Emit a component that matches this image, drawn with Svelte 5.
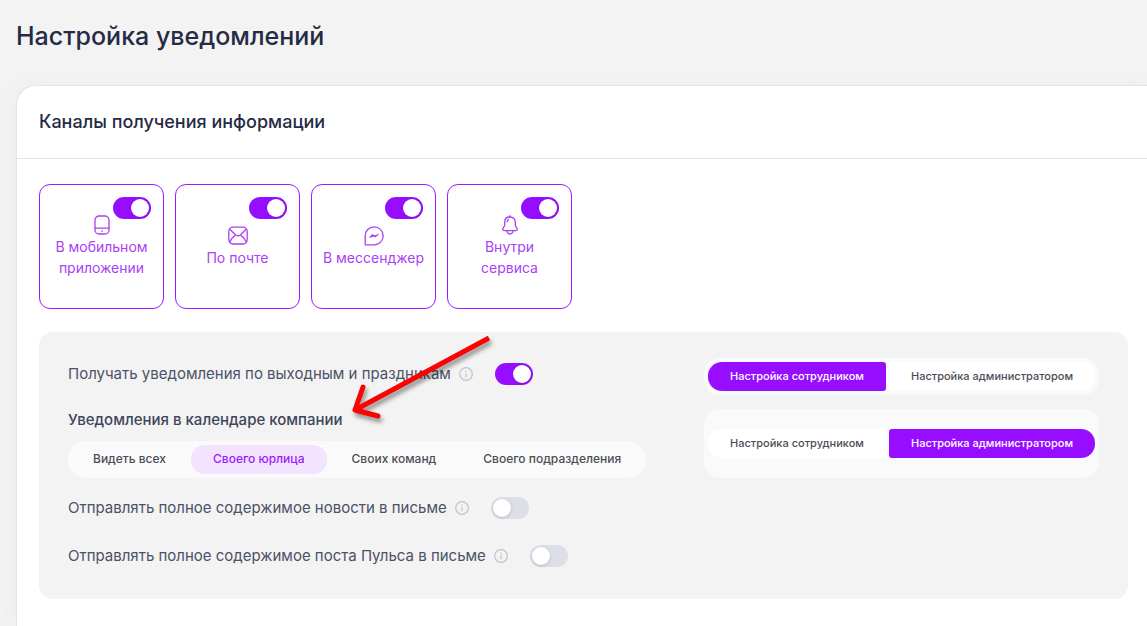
<script lang="ts">
  let channels = $state([
    { icon: "phone", label: "В мобильном приложении", on: true },
    { icon: "mail", label: "По почте", on: true },
    { icon: "chat", label: "В мессенджер", on: true },
    { icon: "bell", label: "Внутри сервиса", on: true },
  ]);

  const scopes = ["Видеть всех", "Своего юрлица", "Своих команд", "Своего подразделения"];
  let scope = $state(1);

  const owners = ["Настройка сотрудником", "Настройка администратором"];
  let weekendOwner = $state(0);
  let calendarOwner = $state(1);

  let weekend = $state(true);
  let news = $state(false);
  let pulse = $state(false);
</script>

{#snippet info()}
  <svg class="info" viewBox="0 0 14 14" aria-hidden="true">
    <circle cx="7" cy="7" r="6.3" />
    <path d="M7 6.2v4M7 3.8v1.2" />
  </svg>
{/snippet}

<main>
  <h1>Настройка уведомлений</h1>

  <section class="card">
    <h2>Каналы получения информации</h2>

    <div class="body">
      <div class="channels">
        {#each channels as channel}
          <label class="channel">
            <input type="checkbox" class="toggle" bind:checked={channel.on} />
            <svg class="icon" viewBox="0 0 20 20" aria-hidden="true">
              {#if channel.icon === "phone"}
                <rect x="3" y="1" width="14" height="18" rx="4" />
                <path d="M3 13.2h14" />
                <path d="M9.6 16.1h.8" />
              {:else if channel.icon === "mail"}
                <rect x="0.8" y="1.2" width="18.4" height="16.8" rx="4.2" />
                <path d="M1.8 3.2l5.6 5.6c1.500 1.300 3.700 1.300 5.200 0l5.600-5.600" />
                <path d="M1.800 16c.9-2.600 2.700-4.800 5.200-6.400M18.200 16c-.9-2.600-2.700-4.800-5.200-6.400" />
              {:else if channel.icon === "chat"}
                <path d="M1.2 18.8V10a9 9 0 1 1 9 8.800z" />
                <path d="M6 11.400l2.600-2.600 2.400 2 3-2.400M8 10.600l1-.6M11 9.600l1.200.2" />
              {:else}
                <path d="M10 2C6.6 2 4.7 4.3 4.7 7.2v2.9c0 1.2-.8 1.9-1.6 3-.8 1.3-.3 2.5 1.1 2.500h11.600c1.400 0 1.900-1.200 1.100-2.500-.8-1.100-1.600-1.800-1.600-3V7.200C15.300 4.300 13.400 2 10 2z" />
                <path d="M10 .7V2M7 15.800c.2 2 1.400 3.200 3 3.200s2.800-1.200 3-3.200M7.200 6.600c.1-.9.6-1.600 1.400-1.900" />
              {/if}
            </svg>
            <span>{channel.label}</span>
          </label>
        {/each}
      </div>

      <div class="panel">
        <div class="options">
          <label class="option">
            <span>Получать уведомления по выходным и праздникам</span>
            {@render info()}
            <input type="checkbox" class="toggle" bind:checked={weekend} />
          </label>

          <div>
            <h3>Уведомления в календаре компании</h3>
            <div class="scopes">
              {#each scopes as name, i}
                <button type="button" class:active={scope === i} onclick={() => (scope = i)}>{name}</button>
              {/each}
            </div>
          </div>

          <div class="letters">
            <label class="option">
              <span>Отправлять полное содержимое новости в письме</span>
              {@render info()}
              <input type="checkbox" class="toggle" bind:checked={news} />
            </label>
            <label class="option">
              <span>Отправлять полное содержимое поста Пульса в письме</span>
              {@render info()}
              <input type="checkbox" class="toggle" bind:checked={pulse} />
            </label>
          </div>
        </div>

        <div class="owners">
          <div class="owner">
            {#each owners as name, i}
              <button type="button" class:active={weekendOwner === i} onclick={() => (weekendOwner = i)}>{name}</button>
            {/each}
          </div>
          <div class="owner tall">
            {#each owners as name, i}
              <button type="button" class:active={calendarOwner === i} onclick={() => (calendarOwner = i)}>{name}</button>
            {/each}
          </div>
        </div>

        <svg class="arrow" viewBox="0 0 150 100" aria-hidden="true">
          <path d="M144 10L10 82" />
          <path d="M18 59L10 82L33 88" stroke-linecap="round" />
        </svg>
      </div>
    </div>
  </section>
</main>

<style>
  :global(body) {
    background: #f3f3f3;
  }
  main {
    padding: 20px 0 0 16px;
    font-family: Inter, "Liberation Sans", sans-serif;
    color: #262b45;
    overflow: hidden;
  }
  h1,
  h2,
  h3 {
    margin: 0;
    font-weight: 500;
  }
  h1 {
    font-size: 25px;
    line-height: 32px;
  }
  .card {
    margin-top: 33px;
    background: #fff;
    border: 1px solid #e4e5ea;
    border-right: 0;
    border-bottom: 0;
    border-top-left-radius: 20px;
    box-shadow: 0 0 16px rgba(222, 232, 242, 0.5);
  }
  h2 {
    padding: 24px 22px;
    border-bottom: 1px solid #e4e5ea;
    font-size: 18px;
    line-height: 24px;
  }
  .body {
    padding: 25px 19px 28px 22px;
  }
  .channels {
    display: flex;
    gap: 11px;
  }
  .channel {
    position: relative;
    display: flex;
    flex-direction: column;
    align-items: center;
    justify-content: center;
    gap: 1px;
    box-sizing: border-box;
    width: 125px;
    height: 125px;
    padding: 0 8px;
    border: 1px solid #9a1aff;
    border-radius: 11px;
    color: #ab3ff5;
    font-size: 14px;
    line-height: 21px;
    text-align: center;
  }
  .channel .toggle {
    position: absolute;
    top: 12px;
    right: 12px;
  }
  .icon {
    width: 20px;
    height: 20px;
    fill: none;
    stroke: #ab3ff5;
    stroke-width: 1.3;
    stroke-linecap: round;
    stroke-linejoin: round;
  }
  .toggle {
    appearance: none;
    display: flex;
    align-items: center;
    flex: none;
    box-sizing: border-box;
    width: 38px;
    height: 22px;
    margin: 0;
    padding: 2px;
    border-radius: 11px;
    background: #dcdfe7;
  }
  .toggle::before {
    content: "";
    width: 18px;
    height: 18px;
    border-radius: 50%;
    background: #fff;
    box-shadow: 0 1px 3px rgba(32, 37, 63, 0.2);
  }
  .toggle:checked {
    justify-content: flex-end;
    background: #960dff;
  }
  .panel {
    position: relative;
    display: flex;
    justify-content: space-between;
    align-items: flex-start;
    margin-top: 23px;
    padding: 26px 29px;
    border-radius: 14px;
    background: #f3f3f3;
  }
  .options {
    padding: 5px 0 6px;
  }
  .option {
    display: flex;
    align-items: center;
    height: 22px;
    color: #4c5167;
    font-size: 15px;
    line-height: 20px;
  }
  .letters {
    display: grid;
    gap: 26px;
    margin-top: 19px;
  }
  .info {
    width: 14px;
    height: 14px;
    margin: 0 22px 0 8px;
    fill: none;
    stroke: #c0c3cf;
    stroke-width: 1.2;
  }
  h3 {
    margin-top: 25px;
    color: #40455c;
    font-size: 15px;
    line-height: 20px;
  }
  .scopes {
    display: flex;
    gap: 3px;
    width: max-content;
    margin-top: 11px;
    padding: 4px 3px;
    border-radius: 18px;
    background: #fafafa;
  }
  button {
    height: 29px;
    border: 0;
    background: none;
    color: #4b4d55;
    font-family: inherit;
    font-size: 12px;
    font-weight: 500;
    line-height: 16px;
    white-space: nowrap;
  }
  .scopes button {
    padding: 0 22px 2px;
    border-radius: 14px;
  }
  .scopes .active {
    background: #f3e3ff;
    color: #9a1aff;
  }
  .owners {
    display: grid;
    gap: 14px;
  }
  .owner {
    display: grid;
    grid-template-columns: 178px 206px;
    gap: 3px;
    padding: 4px;
    border-radius: 16px;
    background: #fafafa;
  }
  .owner.tall {
    padding: 20px 4px;
  }
  .owner button {
    padding: 0 20px 2px;
    background: #fff;
    font-size: 11px;
  }
  .owner button:first-child {
    border-radius: 14px 3px 3px 14px;
  }
  .owner button:last-child {
    border-radius: 3px 14px 14px 3px;
  }
  .owner .active {
    background: #960dff;
    color: #fff;
  }
  /* hand-drawn pointer over the panel */
  .arrow {
    position: absolute;
    top: -4px;
    left: 306px;
    width: 150px;
    height: 100px;
    fill: none;
    stroke: #fb0203;
    stroke-width: 5;
    stroke-linejoin: round;
    filter: drop-shadow(2px 4px 2px rgba(0, 0, 0, 0.4));
    pointer-events: none;
  }
</style>
